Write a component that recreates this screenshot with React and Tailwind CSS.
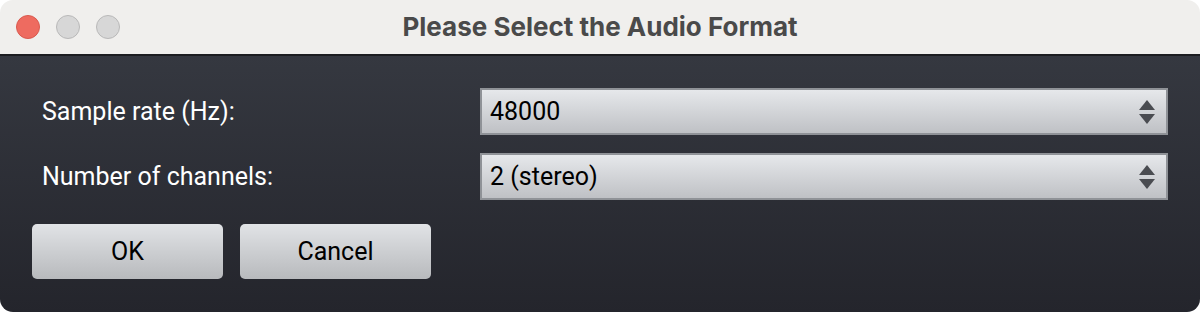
import React from "react";

function Arrows() {
  return (
    <svg width="18" height="26" viewBox="0 0 18 26" className="shrink-0">
      <polygon points="9,1 17,11 1,11" fill="#4a4c51" />
      <polygon points="1,15 17,15 9,25" fill="#4a4c51" />
    </svg>
  );
}

function Combo({ value }) {
  return (
    <div className="flex h-[47px] items-center justify-between border-2 border-[#8f9297] bg-gradient-to-b from-[#e6e8eb] to-[#bfc1c5] pl-[8px] pr-[10px]">
      <span className="text-[25px] leading-none text-black">{value}</span>
      <Arrows />
    </div>
  );
}

function Btn({ children }) {
  return (
    <button className="flex h-[55px] w-[191px] items-center justify-center rounded-[5px] bg-gradient-to-b from-[#e1e3e6] to-[#b8babd] text-[25px] leading-none text-black">
      {children}
    </button>
  );
}

export default function App() {
  return (
    <div className="h-[312px] w-[1200px] bg-white" style={{ fontFamily: "Roboto, 'Liberation Sans', sans-serif" }}>
      <div className="flex h-full w-full flex-col overflow-hidden rounded-[13px]">
        <div className="relative flex h-[56px] shrink-0 items-center justify-center border-b-2 border-[#1c1d21] bg-[#f0efed]">
          <div className="absolute left-[16px] top-[15px] flex gap-[16px]">
            <div className="h-[24px] w-[24px] rounded-full border border-[#d95a4f] bg-[#ee6b60]" />
            <div className="h-[24px] w-[24px] rounded-full border border-[#b9b9b9] bg-[#d7d7d7]" />
            <div className="h-[24px] w-[24px] rounded-full border border-[#b9b9b9] bg-[#d7d7d7]" />
          </div>
          <span
            className="text-[26px] font-bold leading-none text-[#4a4a4a]"
            style={{ fontFamily: "Inter, 'Liberation Sans', sans-serif" }}
          >
            Please Select the Audio Format
          </span>
        </div>
        <div className="flex flex-1 flex-col bg-gradient-to-b from-[#353840] to-[#24252c] px-[32px] pt-[32px]">
          <div className="grid grid-cols-[448px_1fr] gap-y-[18px]">
            <div className="flex items-center pl-[10px] text-[25px] text-white">Sample rate (Hz):</div>
            <Combo value="48000" />
            <div className="flex items-center pl-[10px] text-[25px] text-white">Number of channels:</div>
            <Combo value="2 (stereo)" />
          </div>
          <div className="mt-[24px] flex gap-[17px]">
            <Btn>OK</Btn>
            <Btn>Cancel</Btn>
          </div>
        </div>
      </div>
    </div>
  );
}
